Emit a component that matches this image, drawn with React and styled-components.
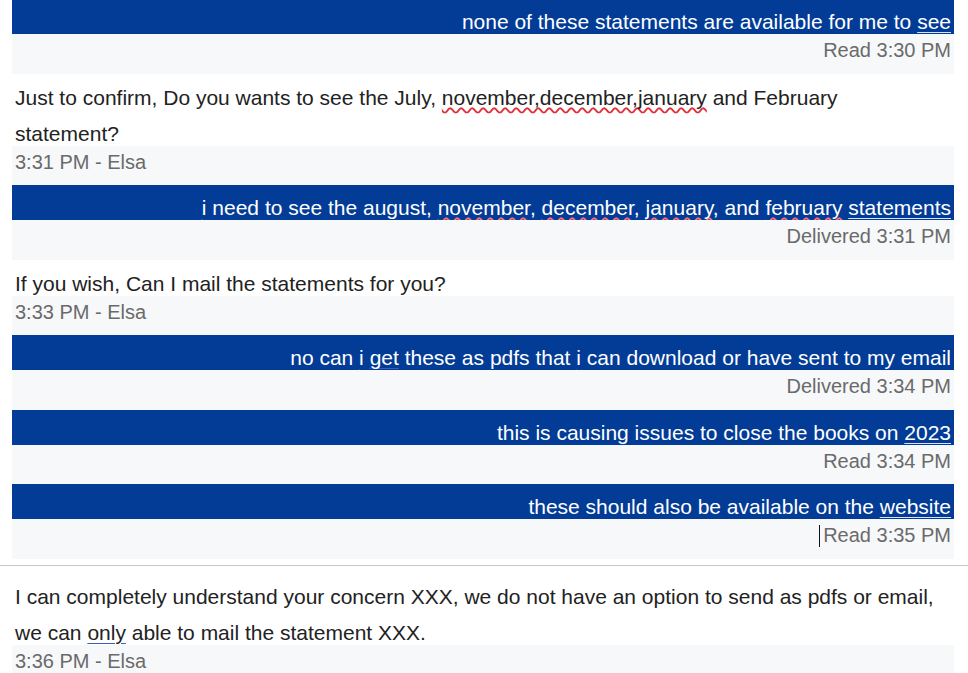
import React from "react";
import styled, { createGlobalStyle } from "styled-components";

const Global = createGlobalStyle`
  html, body { margin: 0; padding: 0; background: #ffffff; }
  body { font-family: "Liberation Sans", Arial, sans-serif; overflow: hidden; }
`;

const Page = styled.div`
  width: 968px;
  height: 673px;
  overflow: hidden;
  background: #fff;
`;

const Thread = styled.div`
  display: flex;
  flex-direction: column;
  padding: 0 14px 0 12px;
  margin-top: ${(p) => p.$offset || 0}px;
`;

const UserBubble = styled.div`
  background: #023c96;
  color: #ffffff;
  font-size: 21px;
  line-height: 24px;
  height: 35px;
  box-sizing: border-box;
  padding: 11px 3px 0 3px;
  text-align: right;
  white-space: nowrap;
`;

const Meta = styled.div`
  background: #f7f8fa;
  color: #6a6a6a;
  font-size: 20px;
  line-height: 24px;
  padding: 4px 3px 11.5px 3px;
  text-align: ${(p) => (p.$right ? "right" : "left")};
`;

const AgentText = styled.div`
  color: #222222;
  font-size: 21px;
  line-height: 36px;
  padding: ${(p) => 6 + (p.$extraTop || 0)}px 14px 0 3px;
  margin-bottom: -6px;
`;

const Separator = styled.div`
  height: 1px;
  background: #c6c6c6;
  margin-top: 6.5px;
`;

const Link = styled.span`
  text-decoration: underline;
  text-decoration-color: ${(p) => (p.$dark ? "#3a5bbf" : "#d6e2ff")};
  text-decoration-thickness: 1px;
  text-underline-offset: 3px;
`;

const Typo = styled.span`
  text-decoration: underline wavy ${(p) => (p.$onBlue ? "#ff6b7a" : "#e0303a")};
  text-decoration-thickness: 1.5px;
  text-underline-offset: 2px;
  text-decoration-skip-ink: none;
`;

const Caret = styled.span`
  display: inline-block;
  width: 0;
  height: 22px;
  border-left: 1px solid #111;
  margin-right: 3px;
  vertical-align: -5px;
`;

export default function App() {
  return (
    <Page>
      <Global />
      <Thread $offset={-1}>
        <UserBubble>
          none of these statements are available for me to <Link>see</Link>
        </UserBubble>
        <Meta $right>Read 3:30 PM</Meta>

        <AgentText>
          Just to confirm, Do you wants to see the July,{" "}
          <Typo>november,december,january</Typo> and February statement?
        </AgentText>
        <Meta>3:31 PM - Elsa</Meta>

        <UserBubble>
          <Typo $onBlue>i</Typo> need to see the august,{" "}
          <Typo $onBlue>november</Typo>, <Typo $onBlue>december</Typo>,{" "}
          <Typo $onBlue>january</Typo>, and <Typo $onBlue>february</Typo>{" "}
          <Link>statements</Link>
        </UserBubble>
        <Meta $right>Delivered 3:31 PM</Meta>

        <AgentText>If you wish, Can I mail the statements for you?</AgentText>
        <Meta>3:33 PM - Elsa</Meta>

        <UserBubble>
          no can <Typo $onBlue>i</Typo> <Link $dark>get</Link> these as pdfs
          that <Typo $onBlue>i</Typo> can download or have sent to my email
        </UserBubble>
        <Meta $right>Delivered 3:34 PM</Meta>

        <UserBubble>
          this is causing issues to close the books on <Link>2023</Link>
        </UserBubble>
        <Meta $right>Read 3:34 PM</Meta>

        <UserBubble>
          these should also be available on the <Link>website</Link>
        </UserBubble>
        <Meta $right>
          <Caret />
          Read 3:35 PM
        </Meta>
      </Thread>
      <Separator />
      <Thread>
        <AgentText $extraTop={7}>
          I can completely understand your concern XXX, we do not have an
          option to send as pdfs or email, we can <Link $dark>only</Link> able
          to mail the statement XXX.
        </AgentText>
        <Meta>3:36 PM - Elsa</Meta>
      </Thread>
    </Page>
  );
}
